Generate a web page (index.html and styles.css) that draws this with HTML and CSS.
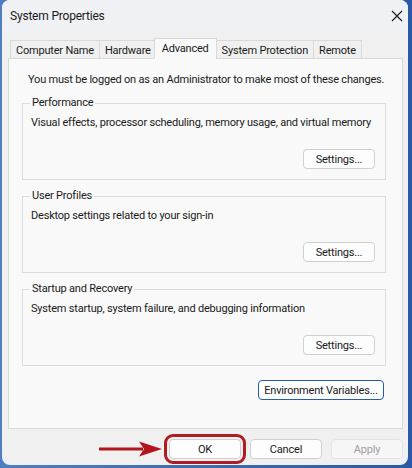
FILE: index.html
```html
<!DOCTYPE html>
<html>
<head>
<meta charset="utf-8">
<link rel="stylesheet" href="styles.css">
</head>
<body>
<div class="window">
  <div class="titlebar">
    <span class="title">System Properties</span>
    <svg class="close" width="12" height="12" viewBox="0 0 12 12"><path d="M1 1 L11 11 M11 1 L1 11" stroke="#1a1a1a" stroke-width="1.1" fill="none"/></svg>
  </div>
  <div class="tabs">
    <div class="tab">Computer Name</div>
    <div class="tab">Hardware</div>
    <div class="tab active">Advanced</div>
    <div class="tab">System Protection</div>
    <div class="tab">Remote</div>
  </div>
  <div class="panel">
    <p class="note">You must be logged on as an Administrator to make most of these changes.</p>
    <fieldset class="group">
      <legend>Performance</legend>
      <p class="desc">Visual effects, processor scheduling, memory usage, and virtual memory</p>
      <div class="btnrow"><button class="btn">Settings...</button></div>
    </fieldset>
    <fieldset class="group">
      <legend>User Profiles</legend>
      <p class="desc">Desktop settings related to your sign-in</p>
      <div class="btnrow"><button class="btn">Settings...</button></div>
    </fieldset>
    <fieldset class="group">
      <legend>Startup and Recovery</legend>
      <p class="desc">System startup, system failure, and debugging information</p>
      <div class="btnrow"><button class="btn">Settings...</button></div>
    </fieldset>
    <div class="envrow"><button class="btn env">Environment Variables...</button></div>
  </div>
  <div class="footer">
    <svg class="arrow" width="64" height="18" viewBox="0 0 64 18"><rect x="0" y="7.5" width="44" height="3" fill="#b3151c"/><path d="M40 1.5 L63 9 L40 16.5 L45 9 Z" fill="#b3151c"/></svg>
    <button class="btn ok">OK</button>
    <button class="btn">Cancel</button>
    <button class="btn" disabled>Apply</button>
  </div>
</div>
</body>
</html>
```
FILE: styles.css
```css
html, body {
  margin: 0;
  padding: 0;
}
body {
  width: 412px;
  height: 468px;
  background: linear-gradient(90deg, #4f7fc0 0%, #3a6cb4 50%, #2a5aa5 100%);
  font-family: Roboto, "Liberation Sans", Arial, sans-serif;
  font-size: 11px;
  letter-spacing: -0.2px;
  color: #1a1a1a;
  overflow: hidden;
}
.window {
  margin-left: 2px;
  width: 406px;
  height: 465px;
  background: #f0f0f0;
  border-radius: 8px;
  overflow: hidden;
  display: flex;
  flex-direction: column;
}
.titlebar {
  height: 32px;
  background: #eff1f5;
  display: flex;
  align-items: center;
  justify-content: space-between;
  padding: 0 5px 0 8px;
  flex-shrink: 0;
}
.title {
  font-size: 12px;
  color: #1a1a1a;
}
.tabs {
  display: flex;
  align-items: flex-end;
  margin: 6px 0 0 8px;
  height: 20px;
  position: relative;
  z-index: 1;
}
.tab {
  height: 18px;
  line-height: 19px;
  padding: 0 5px;
  border: 1px solid #d9d9d9;
  border-bottom: none;
  margin-right: -1px;
  background: #f0f0f0;
  box-sizing: border-box;
  white-space: nowrap;
}
.tab.active {
  height: 21px;
  line-height: 19px;
  padding: 0 7px;
  background: #f9f9f9;
  margin: 0 -1px -1px -2px;
  position: relative;
  z-index: 2;
}
.panel {
  margin-left: 6px;
  width: 395px;
  height: 371px;
  box-sizing: border-box;
  background: #f9f9f9;
  border: 1px solid #d9d9d9;
  padding: 13px 17px 0 13px;
  display: flex;
  flex-direction: column;
}
.note {
  margin: 0 0 8px 6px;
  line-height: 16px;
  white-space: nowrap;
}
.group {
  margin: 0 0 9px 0;
  width: 364px;
  height: 84px;
  box-sizing: border-box;
  border: 1px solid #dcdcdc;
  padding: 3px 10px 0 8px;
  display: flex;
  flex-direction: column;
}
.group legend {
  padding: 0 2px;
  margin-left: -1px;
  line-height: 14px;
}
.desc {
  margin: 2px 0 0 0;
  line-height: 16px;
  white-space: nowrap;
}
.btnrow {
  display: flex;
  justify-content: flex-end;
  margin-top: 18px;
}
.btn {
  font-family: inherit;
  font-size: 11px;
  letter-spacing: -0.2px;
  color: #1a1a1a;
  width: 72px;
  height: 20px;
  padding: 0;
  background: #fdfdfd;
  border: 1px solid #d0d0d0;
  border-radius: 4px;
  box-sizing: border-box;
  white-space: nowrap;
}
.btn:disabled {
  color: #a0a0a0;
  background: #f6f6f6;
  border-color: #e4e4e4;
}
.envrow {
  display: flex;
  justify-content: flex-end;
  margin-top: 5px;
  padding-right: 1px;
}
.btn.env {
  width: 126px;
  border: 1px solid #1f5fa8;
}
.footer {
  display: flex;
  align-items: center;
  justify-content: flex-end;
  gap: 9px;
  padding: 0 5px 0 0;
  margin-top: 10px;
}
.arrow {
  margin-right: -3px;
}
.btn.ok {
  outline: 3px solid #b01c22;
  outline-offset: 2px;
}
```
